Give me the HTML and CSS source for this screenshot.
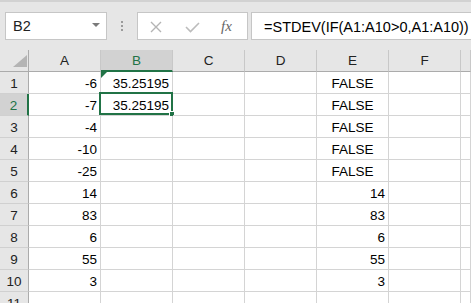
FILE: index.html
```html
<!DOCTYPE html>
<html>
<head>
    <title>STDEV IF</title>
    <link rel="stylesheet" href="styles.css">
</head>
<body>
    <div class="toolbar">
        <div class="name-box">
            <span class="name">B2</span>
            <span class="drop"></span>
        </div>
        <div class="grip"><i></i><i></i><i></i></div>
        <div class="fx-box">
            <svg class="icon-x" width="12" height="12" viewBox="0 0 12 12">
                <path d="M1 1 L11 11 M11 1 L1 11" stroke="#b4b4b4" stroke-width="1.4" fill="none"/>
            </svg>
            <svg class="icon-check" width="15" height="11" viewBox="0 0 15 11">
                <path d="M1 5 L5.5 9.5 L14 1" stroke="#bcbcbc" stroke-width="1.6" fill="none"/>
            </svg>
            <span class="fx">fx</span>
        </div>
        <div class="formula">=STDEV(IF(A1:A10&gt;0,A1:A10))</div>
    </div>

    <div class="sheet">
        <div class="corner"><span class="corner-mark"></span></div>
        <div class="col-head">A</div>
        <div class="col-head active">B</div>
        <div class="col-head">C</div>
        <div class="col-head">D</div>
        <div class="col-head">E</div>
        <div class="col-head">F</div>
        <div class="col-head"></div>

        <div class="row-head">1</div>
        <div class="cell num">-6</div>
        <div class="cell num flagged"><span class="flag"></span>35.25195</div>
        <div class="cell"></div>
        <div class="cell"></div>
        <div class="cell bool">FALSE</div>
        <div class="cell"></div>
        <div class="cell"></div>

        <div class="row-head active">2</div>
        <div class="cell num">-7</div>
        <div class="cell num selected">35.25195<span class="sel-frame"></span><span class="fill-handle"></span></div>
        <div class="cell"></div>
        <div class="cell"></div>
        <div class="cell bool">FALSE</div>
        <div class="cell"></div>
        <div class="cell"></div>

        <div class="row-head">3</div>
        <div class="cell num">-4</div>
        <div class="cell"></div>
        <div class="cell"></div>
        <div class="cell"></div>
        <div class="cell bool">FALSE</div>
        <div class="cell"></div>
        <div class="cell"></div>

        <div class="row-head">4</div>
        <div class="cell num">-10</div>
        <div class="cell"></div>
        <div class="cell"></div>
        <div class="cell"></div>
        <div class="cell bool">FALSE</div>
        <div class="cell"></div>
        <div class="cell"></div>

        <div class="row-head">5</div>
        <div class="cell num">-25</div>
        <div class="cell"></div>
        <div class="cell"></div>
        <div class="cell"></div>
        <div class="cell bool">FALSE</div>
        <div class="cell"></div>
        <div class="cell"></div>

        <div class="row-head">6</div>
        <div class="cell num">14</div>
        <div class="cell"></div>
        <div class="cell"></div>
        <div class="cell"></div>
        <div class="cell num">14</div>
        <div class="cell"></div>
        <div class="cell"></div>

        <div class="row-head">7</div>
        <div class="cell num">83</div>
        <div class="cell"></div>
        <div class="cell"></div>
        <div class="cell"></div>
        <div class="cell num">83</div>
        <div class="cell"></div>
        <div class="cell"></div>

        <div class="row-head">8</div>
        <div class="cell num">6</div>
        <div class="cell"></div>
        <div class="cell"></div>
        <div class="cell"></div>
        <div class="cell num">6</div>
        <div class="cell"></div>
        <div class="cell"></div>

        <div class="row-head">9</div>
        <div class="cell num">55</div>
        <div class="cell"></div>
        <div class="cell"></div>
        <div class="cell"></div>
        <div class="cell num">55</div>
        <div class="cell"></div>
        <div class="cell"></div>

        <div class="row-head">10</div>
        <div class="cell num">3</div>
        <div class="cell"></div>
        <div class="cell"></div>
        <div class="cell"></div>
        <div class="cell num">3</div>
        <div class="cell"></div>
        <div class="cell"></div>

        <div class="row-head">11</div>
        <div class="cell"></div>
        <div class="cell"></div>
        <div class="cell"></div>
        <div class="cell"></div>
        <div class="cell"></div>
        <div class="cell"></div>
        <div class="cell"></div>
    </div>
</body>
</html>
```

FILE: styles.css
```css
html, body {
    margin: 0;
    height: 100%;
    overflow: hidden;
}
body {
    font-family: "Liberation Sans", Arial, sans-serif;
    background-color: #fff;
    color: #000;
}
.toolbar {
    box-sizing: border-box;
    height: 50px;
    padding-top: 10px;
    border-top: 2px solid #d2d2d2;
    background-color: #e6e6e6;
    display: flex;
    align-items: flex-start;
}
.name-box {
    box-sizing: border-box;
    width: 102px;
    height: 28px;
    margin-left: 5px;
    padding: 0 6px 0 7px;
    background: white;
    border: 1px solid #c6c6c6;
    display: flex;
    align-items: center;
    justify-content: space-between;
}
.name {
    font-size: 14.5px;
    color: #222;
}
.drop {
    width: 0;
    height: 0;
    border-left: 4px solid transparent;
    border-right: 4px solid transparent;
    border-top: 4px solid #7a7a7a;
    margin-bottom: 2px;
}
.grip {
    width: 2px;
    height: 28px;
    margin-left: 14px;
    display: flex;
    flex-direction: column;
    justify-content: center;
    gap: 2px;
}
.grip i {
    display: block;
    width: 2px;
    height: 2px;
    background: #9b9b9b;
}
.fx-box {
    box-sizing: border-box;
    width: 111px;
    height: 28px;
    margin-left: 14px;
    padding-left: 12px;
    background: white;
    border: 1px solid #c6c6c6;
    display: flex;
    align-items: center;
}
.icon-x {
    margin-top: 1px;
}
.icon-check {
    margin-left: 23px;
    margin-top: 3px;
}
.fx {
    margin-left: 21px;
    font-family: "Liberation Serif", "Times New Roman", serif;
    font-style: italic;
    font-size: 15px;
    color: #666;
}
.formula {
    box-sizing: border-box;
    flex: 1;
    min-width: 0;
    height: 28px;
    margin-left: 3px;
    padding: 2px 0 0 12px;
    background: white;
    border: 1px solid #c6c6c6;
    border-right: none;
    display: flex;
    align-items: center;
    font-size: 14.5px;
    white-space: nowrap;
    overflow: hidden;
}
.sheet {
    display: grid;
    grid-template-columns: 29px repeat(6, 72px) 10px;
    grid-auto-rows: 22px;
    font-size: 13.5px;
}
.sheet > div {
    box-sizing: border-box;
}
.corner {
    background-color: #e6e6e6;
    border-right: 1px solid #ababab;
    border-bottom: 1px solid #ababab;
    display: flex;
    justify-content: flex-end;
    align-items: flex-end;
    padding: 0 1px 4px 0;
}
.corner-mark {
    width: 0;
    height: 0;
    border-left: 14px solid transparent;
    border-bottom: 12px solid #b4b4b4;
}
.col-head {
    background-color: #e6e6e6;
    border-right: 1px solid #c8c8c8;
    border-bottom: 1px solid #ababab;
    display: flex;
    align-items: center;
    justify-content: center;
    color: #222;
}
.col-head.active {
    background-color: #d2d2d2;
    color: #217346;
    border-bottom: 2px solid #217346;
}
.row-head {
    background-color: #e6e6e6;
    border-right: 1px solid #ababab;
    border-bottom: 1px solid #d0d0d0;
    display: flex;
    align-items: center;
    justify-content: center;
    color: #222;
    padding-top: 1px;
}
.row-head.active {
    background-color: #d2d2d2;
    color: #217346;
    border-right: 2px solid #217346;
}
.cell {
    position: relative;
    border-right: 1px solid #d4d4d4;
    border-bottom: 1px solid #d4d4d4;
    padding: 0 3px 2px;
    display: flex;
    align-items: flex-end;
    line-height: 15px;
    white-space: nowrap;
}
.num {
    justify-content: flex-end;
}
.bool {
    justify-content: center;
}
.flag {
    position: absolute;
    top: -1px;
    left: 0;
    width: 0;
    height: 0;
    border-top: 7px solid #217346;
    border-right: 7px solid transparent;
}
.sel-frame {
    position: absolute;
    top: -2px;
    left: -2px;
    right: -1px;
    bottom: 0;
    border: 2px solid #217346;
}
.fill-handle {
    position: absolute;
    right: -3px;
    bottom: -2px;
    width: 4px;
    height: 4px;
    background: #217346;
    border: 1px solid white;
}
```
